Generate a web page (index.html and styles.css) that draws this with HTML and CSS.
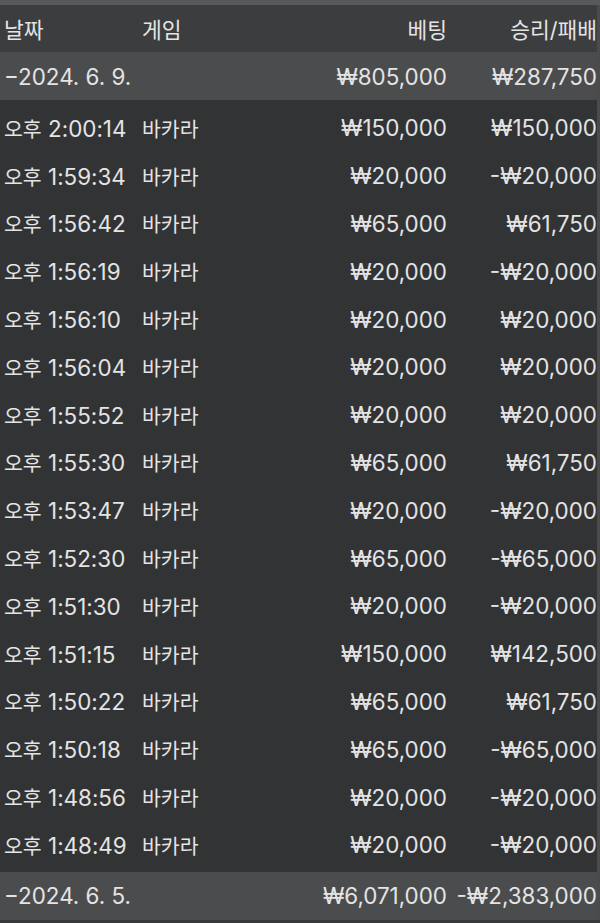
FILE: index.html
```html
<!DOCTYPE html>
<html lang="ko">
<head>
<meta charset="utf-8">
<link rel="stylesheet" href="styles.css">
</head>
<body>
<div class="topbar"></div>
<div class="table">
  <div class="row head">
    <span class="c-date">날짜</span><span class="c-game">게임</span><span class="c-bet">베팅</span><span class="c-res">승리/패배</span>
  </div>
  <div class="row group">
    <span class="c-date">−2024. 6. 9.</span><span class="c-game"></span><span class="c-bet">₩805,000</span><span class="c-res">₩287,750</span>
  </div>
  <div class="rows">
  <div class="row"><span class="c-date"><span class="ko">오후</span> 2:00:14</span><span class="c-game ko">바카라</span><span class="c-bet">₩150,000</span><span class="c-res">₩150,000</span></div>
  <div class="row"><span class="c-date"><span class="ko">오후</span> 1:59:34</span><span class="c-game ko">바카라</span><span class="c-bet">₩20,000</span><span class="c-res">-₩20,000</span></div>
  <div class="row"><span class="c-date"><span class="ko">오후</span> 1:56:42</span><span class="c-game ko">바카라</span><span class="c-bet">₩65,000</span><span class="c-res">₩61,750</span></div>
  <div class="row"><span class="c-date"><span class="ko">오후</span> 1:56:19</span><span class="c-game ko">바카라</span><span class="c-bet">₩20,000</span><span class="c-res">-₩20,000</span></div>
  <div class="row"><span class="c-date"><span class="ko">오후</span> 1:56:10</span><span class="c-game ko">바카라</span><span class="c-bet">₩20,000</span><span class="c-res">₩20,000</span></div>
  <div class="row"><span class="c-date"><span class="ko">오후</span> 1:56:04</span><span class="c-game ko">바카라</span><span class="c-bet">₩20,000</span><span class="c-res">₩20,000</span></div>
  <div class="row"><span class="c-date"><span class="ko">오후</span> 1:55:52</span><span class="c-game ko">바카라</span><span class="c-bet">₩20,000</span><span class="c-res">₩20,000</span></div>
  <div class="row"><span class="c-date"><span class="ko">오후</span> 1:55:30</span><span class="c-game ko">바카라</span><span class="c-bet">₩65,000</span><span class="c-res">₩61,750</span></div>
  <div class="row"><span class="c-date"><span class="ko">오후</span> 1:53:47</span><span class="c-game ko">바카라</span><span class="c-bet">₩20,000</span><span class="c-res">-₩20,000</span></div>
  <div class="row"><span class="c-date"><span class="ko">오후</span> 1:52:30</span><span class="c-game ko">바카라</span><span class="c-bet">₩65,000</span><span class="c-res">-₩65,000</span></div>
  <div class="row"><span class="c-date"><span class="ko">오후</span> 1:51:30</span><span class="c-game ko">바카라</span><span class="c-bet">₩20,000</span><span class="c-res">-₩20,000</span></div>
  <div class="row"><span class="c-date"><span class="ko">오후</span> 1:51:15</span><span class="c-game ko">바카라</span><span class="c-bet">₩150,000</span><span class="c-res">₩142,500</span></div>
  <div class="row"><span class="c-date"><span class="ko">오후</span> 1:50:22</span><span class="c-game ko">바카라</span><span class="c-bet">₩65,000</span><span class="c-res">₩61,750</span></div>
  <div class="row"><span class="c-date"><span class="ko">오후</span> 1:50:18</span><span class="c-game ko">바카라</span><span class="c-bet">₩65,000</span><span class="c-res">-₩65,000</span></div>
  <div class="row"><span class="c-date"><span class="ko">오후</span> 1:48:56</span><span class="c-game ko">바카라</span><span class="c-bet">₩20,000</span><span class="c-res">-₩20,000</span></div>
  <div class="row"><span class="c-date"><span class="ko">오후</span> 1:48:49</span><span class="c-game ko">바카라</span><span class="c-bet">₩20,000</span><span class="c-res">-₩20,000</span></div>
  </div>
  <div class="row group">
    <span class="c-date">−2024. 6. 5.</span><span class="c-game"></span><span class="c-bet">₩6,071,000</span><span class="c-res">-₩2,383,000</span>
  </div>
</div>
</body>
</html>
```
FILE: styles.css
```css
html, body {
  margin: 0;
  padding: 0;
  background: #38393a;
}
body {
  width: 600px;
  height: 923px;
  overflow: hidden;
  font-family: "Inter", "Noto Sans CJK KR", sans-serif;
  color: #e4e4e4;
  font-size: 22.4px;
}
.topbar {
  height: 5px;
  background: #58595a;
}
.table {
  background: #323335;
  border-right: 3px solid #4a4b4c;
}
.rows {
  padding: 4px 0 3px;
}
.row {
  display: grid;
  grid-template-columns: 138px 150px 155px 150px;
  height: 48px;
  align-items: center;
  padding-left: 4px;
  white-space: nowrap;
}
.rows .row {
  height: 47.8px;
}
.ko {
  font-size: 20.5px;
}
.head {
  height: 47px;
  background: #3c3d3f;
  font-size: 21.5px;
}
.group {
  background: #4b4c4d;
}
.c-bet, .c-res {
  text-align: right;
}
.c-date, .c-game { text-align: left; }
```
